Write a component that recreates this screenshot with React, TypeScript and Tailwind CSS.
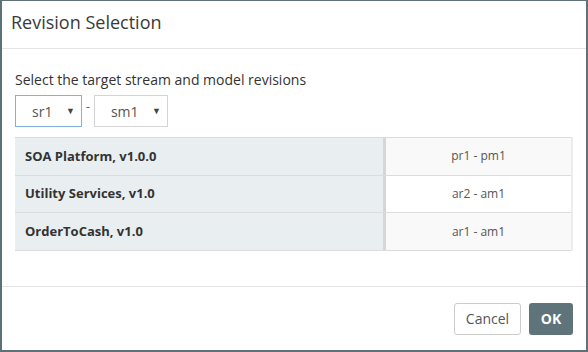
const ROWS = [
  { name: "SOA Platform, v1.0.0", rev: "pr1 - pm1" },
  { name: "Utility Services, v1.0", rev: "ar2 - am1" },
  { name: "OrderToCash, v1.0", rev: "ar1 - am1" },
];

function Select({ value, width, focused }: { value: string; width: string; focused?: boolean }) {
  return (
    <div
      className={`flex h-[32px] items-center justify-between bg-white pl-[16px] pr-[6px] text-[14px] text-[#555] ${width} ${
        focused ? "border border-[#7fb2de]" : "border border-[#d4d4d4]"
      }`}
    >
      <span>{value}</span>
      <span className="text-[9px] text-[#444]">▼</span>
    </div>
  );
}

export default function App() {
  return (
    <div className="flex h-[352px] w-[588px] flex-col border-x-2 border-t border-b-2 border-[#5e7179] bg-white font-['Open_Sans',sans-serif] text-[#333]">
      <div className="h-[48px] shrink-0 border-b border-[#e5e5e5] pl-[9px] pt-[8px] text-[18px] text-[#3a3a3a]">
        Revision Selection
      </div>

      <div className="flex-1 pl-[13px] pr-[13px] pt-[21px]">
        <p className="text-[14px] leading-[20px] text-[#333]">Select the target stream and model revisions</p>
        <div className="mt-[5px] flex items-center">
          <Select value="sr1" width="w-[67px]" focused />
          <span className="mx-[4px] -mt-[8px] text-[12px] text-[#555]">-</span>
          <Select value="sm1" width="w-[74px]" />
        </div>

        <div className="mt-[10px] flex">
          <table className="w-[556px] border-collapse">
            <tbody>
              {ROWS.map((r, i) => (
                <tr key={r.name} className="h-[35px]">
                  <td className="w-[368px] border-y border-[#dcdcdc] bg-[#e9eef1] pl-[10px] text-[13px] font-bold text-[#333]">
                    {r.name}
                  </td>
                  <td className="w-[3px] border-y border-[#dcdcdc] bg-[#d6d6d6] p-0" />
                  <td
                    className={`border-y border-[#dcdcdc] text-center text-[12px] text-[#555] ${
                      i === 1 ? "bg-white" : "bg-[#f9f9f9]"
                    }`}
                  >
                    {r.rev}
                  </td>
                </tr>
              ))}
            </tbody>
          </table>
          <div className="h-[114px] w-[2px] bg-[#ececec]" />
        </div>
      </div>

      <div className="flex h-[64px] shrink-0 items-center justify-end gap-[8px] border-t border-[#e5e5e5] pr-[13px]">
        <button className="h-[32px] w-[67px] rounded-[3px] border border-[#cccccc] bg-white text-[14px] text-[#555]">
          Cancel
        </button>
        <button className="h-[32px] w-[44px] rounded-[3px] bg-[#5f737b] text-[14px] font-bold text-white">
          OK
        </button>
      </div>
    </div>
  );
}
